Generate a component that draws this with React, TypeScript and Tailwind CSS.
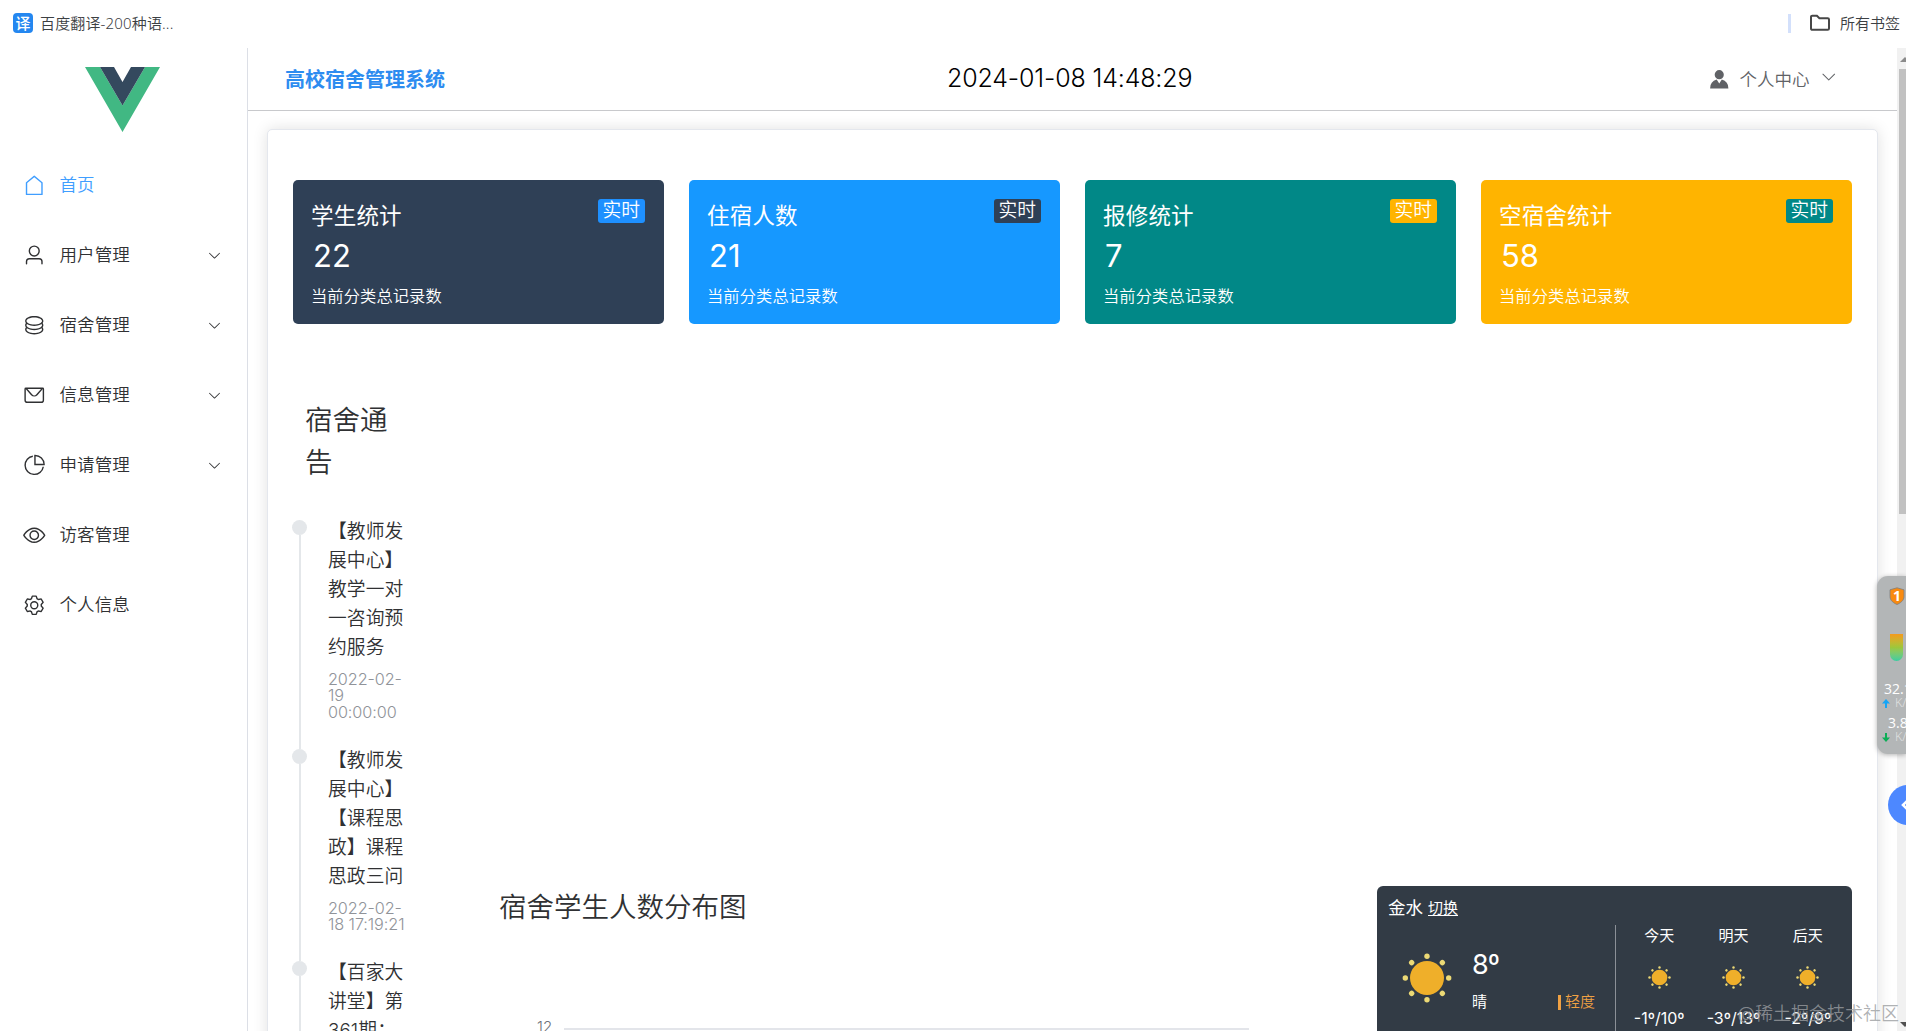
// src/App.tsx
import type { ReactNode } from "react";

// icon paths, all drawn on a 1024 grid
const icons = {
  house: [
    "M192 413.952V896h640V413.952L512 147.328 192 413.952zM139.52 374.4l352-293.312a32 32 0 0 1 40.96 0l352 293.312A32 32 0 0 1 896 398.976V928a32 32 0 0 1-32 32H160a32 32 0 0 1-32-32V398.976a32 32 0 0 1 11.52-24.576z",
  ],
  user: [
    "M512 512a192 192 0 1 0 0-384 192 192 0 0 0 0 384zm0 64a256 256 0 1 1 0-512 256 256 0 0 1 0 512zm320 320v-96a96 96 0 0 0-96-96H288a96 96 0 0 0-96 96v96a32 32 0 1 1-64 0v-96a160 160 0 0 1 160-160h448a160 160 0 0 1 160 160v96a32 32 0 1 1-64 0z",
  ],
  coin: [
    "m161.92 580.736 29.888 58.88C171.328 659.776 160 681.728 160 704c0 82.304 155.328 160 352 160s352-77.696 352-160c0-22.272-11.392-44.16-31.808-64.32l30.464-58.432C903.936 615.808 928 657.664 928 704c0 129.728-188.544 224-416 224S96 833.728 96 704c0-46.592 24.32-88.576 65.92-123.264z",
    "m161.92 388.736 29.888 58.88C171.328 467.84 160 489.792 160 512c0 82.304 155.328 160 352 160s352-77.696 352-160c0-22.272-11.392-44.16-31.808-64.32l30.464-58.432C903.936 423.808 928 465.664 928 512c0 129.728-188.544 224-416 224S96 641.728 96 512c0-46.592 24.32-88.576 65.92-123.264z",
    "M512 544c-227.456 0-416-94.272-416-224S284.544 96 512 96s416 94.272 416 224-188.544 224-416 224zm0-64c196.672 0 352-77.696 352-160S708.672 160 512 160s-352 77.696-352 160 155.328 160 352 160z",
  ],
  message: [
    "M128 224v512a64 64 0 0 0 64 64h640a64 64 0 0 0 64-64V224H128zm0-64h768a64 64 0 0 1 64 64v512a128 128 0 0 1-128 128H192A128 128 0 0 1 64 736V224a64 64 0 0 1 64-64z",
    "M904 224 656.512 506.88a192 192 0 0 1-289.024 0L120 224h784zm-698.944 0 210.56 240.704a128 128 0 0 0 192.704 0L818.944 224H205.056z",
  ],
  pie: [
    "M448 68.48v64.832A384.128 384.128 0 0 0 512 896a384.128 384.128 0 0 0 378.688-320h64.768A448.128 448.128 0 0 1 64 512 448.128 448.128 0 0 1 448 68.48z",
    "M576 97.28V448h350.72A384.064 384.064 0 0 0 576 97.28zM512 64V33.152A448 448 0 0 1 990.848 512H512V64z",
  ],
  view: [
    "M512 160c320 0 512 352 512 352S832 864 512 864 0 512 0 512s192-352 512-352zm0 64c-225.28 0-384.128 208.064-436.8 288 52.608 79.872 211.456 288 436.8 288 225.28 0 384.128-208.064 436.8-288-52.608-79.872-211.456-288-436.8-288zm0 64a224 224 0 1 1 0 448 224 224 0 0 1 0-448zm0 64a160.192 160.192 0 0 0-160 160c0 88.192 71.744 160 160 160s160-71.808 160-160-71.744-160-160-160z",
  ],
  setting: [
    "M600.704 64a32 32 0 0 1 30.464 22.208l35.2 109.376c14.784 7.232 28.928 15.36 42.432 24.512l112.384-24.192a32 32 0 0 1 34.432 15.36L944.32 364.8a32 32 0 0 1-4.032 37.504l-77.12 85.12a357.12 357.12 0 0 1 0 49.024l77.12 85.248a32 32 0 0 1 4.032 37.504l-88.704 153.6a32 32 0 0 1-34.432 15.296L708.8 803.904c-13.44 9.088-27.648 17.28-42.368 24.512l-35.264 109.376A32 32 0 0 1 600.704 960H423.296a32 32 0 0 1-30.464-22.208L357.696 828.48a351.616 351.616 0 0 1-42.56-24.64l-112.32 24.256a32 32 0 0 1-34.432-15.36L79.68 659.2a32 32 0 0 1 4.032-37.504l77.12-85.248a357.12 357.12 0 0 1 0-48.896l-77.12-85.248A32 32 0 0 1 79.68 364.8l88.704-153.6a32 32 0 0 1 34.432-15.296l112.32 24.256c13.568-9.152 27.776-17.408 42.56-24.64l35.2-109.312A32 32 0 0 1 423.232 64H600.64zm-23.424 64H446.72l-36.352 113.088-24.512 11.968a294.113 294.113 0 0 0-34.816 20.096l-22.656 15.36-116.224-25.088-65.28 113.152 79.68 88.192-1.92 27.136a293.12 293.12 0 0 0 0 40.192l1.92 27.136-79.808 88.192 65.344 113.152 116.224-25.024 22.656 15.296a294.113 294.113 0 0 0 34.816 20.096l24.512 11.968L446.72 896h130.688l36.48-113.152 24.448-11.904a288.282 288.282 0 0 0 34.752-20.096l22.592-15.296 116.288 25.024 65.28-113.152-79.744-88.192 1.92-27.136a293.12 293.12 0 0 0 0-40.256l-1.92-27.136 79.808-88.128-65.344-113.152-116.288 24.96-22.592-15.232a287.616 287.616 0 0 0-34.752-20.096l-24.448-11.904L577.344 128zM512 320a192 192 0 1 1 0 384 192 192 0 0 1 0-384zm0 64a128 128 0 1 0 0 256 128 128 0 0 0 0-256z",
  ],
  avatar: [
    "M628.736 528.896A416 416 0 0 1 928 928H96a415.872 415.872 0 0 1 299.264-399.104L512 704l116.736-175.104zM720 304a208 208 0 1 1-416 0 208 208 0 0 1 416 0z",
  ],
  arrowDown: [
    "M831.872 340.864 512 652.672 192.128 340.864a30.592 30.592 0 0 0-42.752 0 29.12 29.12 0 0 0 0 41.6L489.664 714.24a32 32 0 0 0 44.672 0l340.288-331.712a29.12 29.12 0 0 0 0-41.728 30.592 30.592 0 0 0-42.752 0z",
  ],
};

type IconName = keyof typeof icons;

function Icon({ name, className }: { name: IconName; className: string }) {
  return (
    <svg viewBox="0 0 1024 1024" fill="currentColor" className={className}>
      {icons[name].map((d) => (
        <path key={d} d={d} />
      ))}
    </svg>
  );
}

const menu: { name: string; icon: IconName; sub?: boolean; active?: boolean }[] = [
  { name: "首页", icon: "house", active: true },
  { name: "用户管理", icon: "user", sub: true },
  { name: "宿舍管理", icon: "coin", sub: true },
  { name: "信息管理", icon: "message", sub: true },
  { name: "申请管理", icon: "pie", sub: true },
  { name: "访客管理", icon: "view" },
  { name: "个人信息", icon: "setting" },
];

const stats = [
  { title: "学生统计", value: 22, bg: "bg-[#2f4056]", tag: "bg-[#1e90ff]" },
  { title: "住宿人数", value: 21, bg: "bg-[#1698ff]", tag: "bg-[#2f4056]" },
  { title: "报修统计", value: 7, bg: "bg-[#018887]", tag: "bg-[#ffb400]" },
  { title: "空宿舍统计", value: 58, bg: "bg-[#ffb400]", tag: "bg-[#018887]" },
];

const notices = [
  {
    lines: ["【教师发", "展中心】", "教学一对", "一咨询预", "约服务"],
    time: ["2022-02-", "19", "00:00:00"],
    height: "h-[229px]",
  },
  {
    lines: ["【教师发", "展中心】", "【课程思", "政】课程", "思政三问"],
    time: ["2022-02-", "18 17:19:21"],
    height: "h-[212px]",
  },
  {
    lines: ["【百家大", "讲堂】第", "361期："],
    time: [],
    height: "h-[212px]",
  },
];

const forecast = [
  { day: "今天", range: "-1º/10º" },
  { day: "明天", range: "-3º/13º" },
  { day: "后天", range: "-2º/9º" },
];

function BookmarkBar() {
  return (
    <div className="flex h-[46px] mb-[2px] shrink-0 items-center pl-[13px] font-['Noto_Sans','Noto_Sans_CJK_SC',sans-serif] text-[15px] text-[#3c4043]">
      <span className="flex size-5 items-center justify-center rounded-[4px] bg-[#2487f0] text-[15px] font-medium text-white">
        译
      </span>
      <span className="ml-[7px] whitespace-nowrap tracking-[0.15px]">百度翻译-200种语...</span>
      <span className="ml-auto h-[19px] w-[3px] bg-[#d3e0fb]" />
      <svg viewBox="0 0 22 18" className="ml-[18px] h-[18px] w-[22px]" fill="none" stroke="#474747" strokeWidth="2">
        <path d="M2 14.5V3a1.3 1.3 0 0 1 1.3-1.3h4.6l2.5 2.6h8.3A1.3 1.3 0 0 1 20 5.600v8.900a1.300 1.300 0 0 1-1.300 1.300H3.300A1.300 1.300 0 0 1 2 14.500z" />
      </svg>
      <span className="mr-[6px] ml-[9px]">所有书签</span>
    </div>
  );
}

function Sidebar() {
  return (
    <aside className="w-[248px] shrink-0 border-r border-[#dcdfe6]">
      <svg viewBox="0 0 75 65" className="mt-[19px] ml-[85px] h-[65px] w-[75px]">
        <path d="M0 0h15l22.500 38.500L60 0h15L37.500 65z" fill="#41b883" />
        <path d="M15 0h14l8.500 15L46 0h14L37.500 38.500z" fill="#34495e" />
      </svg>
      <nav className="mt-[18px]">
        {menu.map((item) => (
          <div
            key={item.name}
            className={`flex h-[70px] items-center pl-[23px] text-[17.5px] ${
              item.active ? "text-[#409eff]" : "text-[#303133]"
            }`}
          >
            <Icon name={item.icon} className="size-[22.5px]" />
            <span className="mt-px ml-[14px] tracking-[0.1px]">{item.name}</span>
            {item.sub && <Icon name="arrowDown" className="mr-[25px] ml-auto size-[15px]" />}
          </div>
        ))}
      </nav>
    </aside>
  );
}

function Header() {
  return (
    <header className="flex h-[63px] shrink-0 items-center border-b border-[#c8c9cc] pl-[37px]">
      <h1 className="mt-[2px] w-[662px] text-[20px] font-bold text-[#2d8cf0]">高校宿舍管理系统</h1>
      <time className="text-[25px] tracking-[-0.15px] whitespace-pre text-black">2024-01-08 14:48:29</time>
      <div className="mr-[60px] ml-auto flex items-center text-[17.5px] text-[#606266]">
        <Icon name="avatar" className="size-[22.5px]" />
        <span className="mt-[2px] ml-[9px]">个人中心</span>
        <Icon name="arrowDown" className="-mt-1 ml-[10px] size-[17.5px]" />
      </div>
    </header>
  );
}

function StatCard({ title, value, bg, tag }: (typeof stats)[number]) {
  return (
    <div className={`h-36 rounded-[5px] pt-[19px] pr-[19px] pl-[18px] text-white ${bg}`}>
      <div className="flex items-start justify-between">
        <h2 className="text-[22.5px] leading-[34px] font-normal tracking-[0.2px]">{title}</h2>
        <span className={`h-6 rounded-[3px] px-[5px] text-[18.75px] leading-[23px] ${tag}`}>实时</span>
      </div>
      <p className="ml-[2px] text-[31px] leading-[46px] font-normal">{value}</p>
      <p className="mt-[4px] text-[16.25px] leading-[26px] tracking-[0.1px]">当前分类总记录数</p>
    </div>
  );
}

function Timeline() {
  return (
    <ul>
      {notices.map((notice) => (
        <li key={notice.lines.join("")} className={`flex ${notice.height}`}>
          <div className="flex w-[15px] flex-col items-center">
            <span className="size-[15px] shrink-0 rounded-full bg-[#e4e7ea]" />
            <span className="w-[2px] grow bg-[#e4e7ea]" />
          </div>
          <div className="ml-[21px] whitespace-nowrap">
            <div className="-mt-[3px] text-[18.75px] leading-[29px] tracking-[0.1px] text-[#303133]">
              {notice.lines.map((line) => (
                <p key={line}>{line}</p>
              ))}
            </div>
            <div className="mt-[9px] text-[16.25px] leading-[16.25px] tracking-[-0.1px] text-[#909399]">
              {notice.time.map((line) => (
                <p key={line}>{line}</p>
              ))}
            </div>
          </div>
        </li>
      ))}
    </ul>
  );
}

function Sun({ className }: { className: string }) {
  return (
    <svg viewBox="0 0 50 50" className={className}>
      <circle cx="25" cy="25" r="17" fill="#efaf2a" />
      {[0, 45, 90, 135, 180, 225, 270, 315].map((deg) => (
        <circle key={deg} cx="25" cy="3.300" r="2.700" fill="#ecd975" transform={`rotate(${deg} 25 25)`} />
      ))}
    </svg>
  );
}

function Weather() {
  return (
    <div className="mt-[562px] flex h-[200px] w-[475px] flex-col rounded-[6px] bg-[#323b45] text-white">
      <div className="mt-[9px] flex h-[26px] items-center gap-[5px] pl-[11px]">
        <span className="text-[17.5px] font-normal">金水</span>
        <span className="text-[15px] font-normal underline underline-offset-2">切换</span>
      </div>
      <div className="mt-[4px] flex grow">
        <div className="flex w-[238px] pl-[25px]">
          <Sun className="mt-[28px] size-[50px]" />
          <div className="ml-5 w-[86px]">
            <p className="mt-[23px] text-[27px] leading-[34px] font-normal tracking-[-1px]">8º</p>
            <p className="mt-[9px] text-[15px] leading-[22px] font-normal">晴</p>
          </div>
          <div className="mt-[66px] flex h-[22px] items-center">
            <span className="h-[15px] w-[3px] bg-[#f0a143]" />
            <span className="ml-1 text-[15px] text-[#f0a143]">轻度</span>
          </div>
        </div>
        <div className="w-px bg-[#8b9097]" />
        <div className="grid grow grid-cols-3 pr-[7px] pl-[6px]">
          {forecast.map((item) => (
            <div key={item.day} className="flex flex-col items-center">
              <span className="text-[15px] leading-[22px] font-normal">{item.day}</span>
              <Sun className="mt-[19px] size-[23px]" />
              <span className="mt-[18px] text-[16px] leading-[22px] font-normal">{item.range}</span>
            </div>
          ))}
        </div>
      </div>
    </div>
  );
}

function Scrollbar() {
  return (
    <div className="flex w-[9px] shrink-0 flex-col items-end overflow-hidden bg-[#f1f1f1]">
      <span className="mt-[9px] -mr-[4px] border-x-[5px] border-b-[5px] border-x-transparent border-b-[#8a8a8a]" />
      <span className="mt-[7px] h-[445px] w-[7px] bg-[#c1c1c1]" />
      <span className="-mr-[4px] mt-auto mb-[4px] border-x-[5px] border-t-[5px] border-x-transparent border-t-[#505050]" />
    </div>
  );
}

function Speed({ value, color, down }: { value: string; color: string; down?: boolean }) {
  return (
    <div className="whitespace-nowrap">
      <p className={`text-[14px] leading-[18px] font-normal text-white ${down ? "pl-[11px]" : "pl-[7px]"}`}>{value}</p>
      <div className="-mt-[3px] mb-[3px] flex h-4 items-center pl-[5px]">
        <svg viewBox="0 0 8 9" className={`h-[9px] w-2 shrink-0 ${color} ${down ? "rotate-180" : ""}`}>
          <path d="M4 0l4 4.500H5V9H3V4.500H0z" fill="currentColor" />
        </svg>
        <span className="ml-[5px] text-[12.5px] text-[#e3e4e4]">K/s</span>
      </div>
    </div>
  );
}

function FloatingTools(): ReactNode {
  return (
    <>
      <div className="absolute top-[576px] right-0 h-[178px] w-[29px] overflow-hidden rounded-l-[11px] bg-[#b3b6b7] pt-[11px] font-['Open_Sans',sans-serif] shadow-[0_1px_5px_rgba(0,0,0,0.3)]">
        <div className="relative ml-3 flex h-[18px] w-4 items-center justify-center">
          <svg viewBox="0 0 16 18" className="absolute size-full">
            <path d="M8 .8l7 2v6.700c0 4-3.500 6.500-7 8-3.500-1.500-7-4-7-8V2.800z" fill="#f88a10" stroke="#7d7f80" strokeWidth=".8" />
          </svg>
          <span className="relative text-[14px] leading-none font-bold text-white">1</span>
        </div>
        <div className="mt-[29px] ml-[13px] h-[27px] w-[13px] rounded-b-full bg-linear-to-b from-[#f39a1c] via-[#9cc73b] to-[#35cda0]" />
        <div className="mt-[19px]">
          <Speed value="32.1" color="text-[#16a5f5]" />
          <Speed value="3.8" color="text-[#0cae56]" down />
        </div>
      </div>
      <div className="absolute top-[785px] -right-[22px] size-10 rounded-full bg-[#4d88ff]">
        <svg viewBox="0 0 12 12" className="mt-[14px] ml-[13px] size-3" fill="none" stroke="#fff" strokeWidth="2.600">
          <path d="M7 1L2 6l5 5" />
        </svg>
      </div>
    </>
  );
}

export default function App() {
  return (
    <div className="relative flex h-[1031px] w-[1906px] flex-col overflow-hidden bg-white font-['Inter','Noto_Sans_CJK_SC',sans-serif] font-[350]">
      <BookmarkBar />
      <div className="flex min-h-0 grow">
        <Sidebar />
        <main className="flex min-w-0 grow flex-col overflow-hidden">
          <Header />
          <div className="min-h-0 grow overflow-hidden px-[19px] pt-[18px]">
            <div className="h-[1400px] rounded-[5px] border border-[#e4e7ed] bg-white px-[25px] pt-[50px] shadow-[0_0_15px_rgba(0,0,0,0.12)]">
              <div className="grid grid-cols-4 gap-[25px]">
                {stats.map((item) => (
                  <StatCard key={item.title} {...item} />
                ))}
              </div>
              <div className="flex">
                <div className="-ml-px w-[207px] shrink-0 pt-[75px]">
                  <h2 className="mb-[37px] ml-[13px] w-[90px] text-[27.5px] leading-[42px] text-[#303133]">
                    宿舍通告
                  </h2>
                  <Timeline />
                </div>
                <section className="grow pt-[562px]">
                  <h2 className="text-[27.5px] leading-[42px] text-[#303133]">宿舍学生人数分布图</h2>
                  <div className="mt-[89px] flex items-center text-[15px] leading-[20px] text-[#6e7079]">
                    <span className="ml-[38px] w-[27px]">12</span>
                    <span className="mt-[4px] h-[2px] w-[685px] bg-[#e3e5ea]" />
                  </div>
                </section>
                <Weather />
              </div>
            </div>
          </div>
        </main>
        <Scrollbar />
      </div>
      <FloatingTools />
      <span className="absolute right-[7px] bottom-[4px] text-[18px] leading-[26px] whitespace-nowrap text-[#9a9da0]/80">
        @稀土掘金技术社区
      </span>
    </div>
  );
}
